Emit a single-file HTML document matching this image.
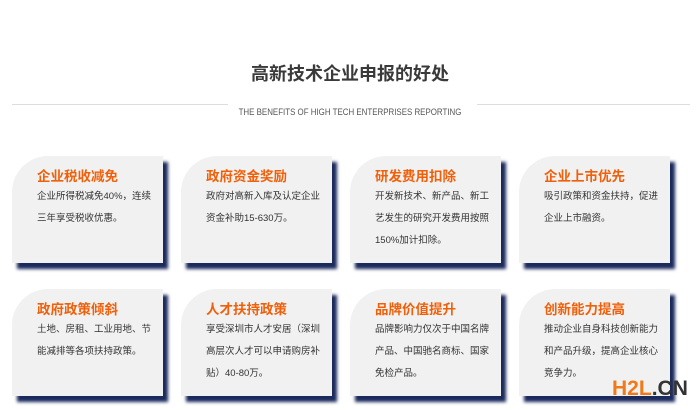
<!DOCTYPE html>
<html><head><meta charset="utf-8"><style>
body{margin:0;width:700px;height:410px;background:#fff;overflow:hidden;position:relative;font-family:"Liberation Sans","Noto Sans CJK SC",sans-serif}
.t{position:absolute;left:0;width:700px;top:60px;text-align:center;font-size:18px;font-weight:bold;color:#3a3a3a}
.l{position:absolute;top:104px;height:1px;background:#ddd}
.s{position:absolute;left:0;width:700px;top:107px;text-align:center;font-size:9px;color:#555;transform:scaleX(.88)}
.c{position:absolute;width:151px;height:107px;background:#f1f1f1;border-top-left-radius:36px;box-shadow:5px 6px 3px #1b2a5c}
.c h3{margin:0;position:absolute;left:25px;top:9px;font-size:13.5px;color:#f0600a;font-weight:bold}
.c p{margin:0;position:absolute;left:25px;top:30px;width:135px;font-size:9.5px;line-height:22px;color:#333;white-space:nowrap}
.logo{position:absolute;left:612px;top:377px;font-size:21px;font-weight:bold}
</style></head><body>
<div class="t">高新技术企业申报的好处</div>
<div class="l" style="left:12px;width:216px"></div>
<div class="l" style="left:477px;width:213px"></div>
<div class="s">THE BENEFITS OF HIGH TECH ENTERPRISES REPORTING</div>

<div class="c" style="left:12px;top:156px"><h3>企业税收减免</h3><p>企业所得税减免40%，连续<br>三年享受税收优惠。</p></div>
<div class="c" style="left:181px;top:156px"><h3>政府资金奖励</h3><p>政府对高新入库及认定企业<br>资金补助15-630万。</p></div>
<div class="c" style="left:350px;top:156px"><h3>研发费用扣除</h3><p>开发新技术、新产品、新工<br>艺发生的研究开发费用按照<br>150%加计扣除。</p></div>
<div class="c" style="left:519px;top:156px"><h3>企业上市优先</h3><p>吸引政策和资金扶持，促进<br>企业上市融资。</p></div>

<div class="c" style="left:12px;top:289px"><h3>政府政策倾斜</h3><p>土地、房租、工业用地、节<br>能减排等各项扶持政策。</p></div>
<div class="c" style="left:181px;top:289px"><h3>人才扶持政策</h3><p>享受深圳市人才安居（深圳<br>高层次人才可以申请购房补<br>贴）40-80万。</p></div>
<div class="c" style="left:350px;top:289px"><h3>品牌价值提升</h3><p>品牌影响力仅次于中国名牌<br>产品、中国驰名商标、国家<br>免检产品。</p></div>
<div class="c" style="left:519px;top:289px"><h3>创新能力提高</h3><p>推动企业自身科技创新能力<br>和产品升级，提高企业核心<br>竞争力。</p></div>

<div class="logo"><span style="color:#f07a1a">H2L</span><span style="color:#333">.CN</span></div>
</body></html>
